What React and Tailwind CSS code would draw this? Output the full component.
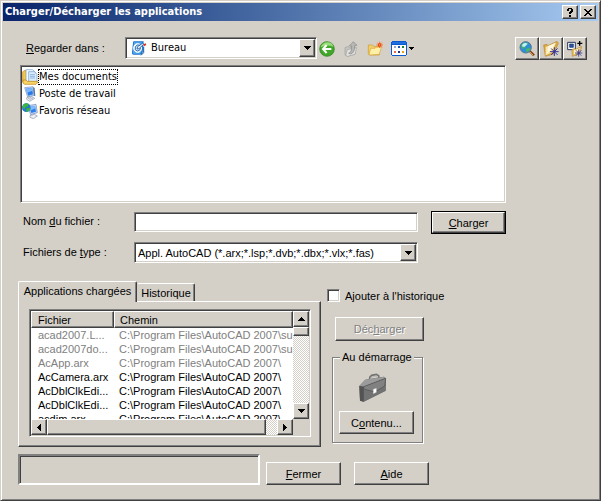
import { useState } from "react"
import clsx from "clsx"

const SUNKEN =
    "border border-t-[#808080] border-l-[#808080] border-r-white border-b-white p-px shadow-[inset_1px_1px_0_#404040,inset_-1px_-1px_0_#d4d0c8]"
const RAISED =
    "bg-[#d4d0c8] border border-t-white border-l-white border-r-[#404040] border-b-[#404040] shadow-[inset_-1px_-1px_0_#808080]"
const DITHER =
    "bg-[repeating-conic-gradient(#fff_0_25%,#d4d0c8_0_50%)] bg-[length:2px_2px]"

const ARROWS = {
    up: { box: "0 0 7 4", d: "M3 0h1v1h1v1h1v1h1v1H0V3h1V2h1V1h1z", size: "w-[7px] h-1" },
    down: { box: "0 0 7 4", d: "M0 0h7v1H6v1H5v1H4v1H3V3H2V2H1V1H0z", size: "w-[7px] h-1" },
    left: { box: "0 0 4 7", d: "M4 0v7H3V6H2V5H1V4H0V3h1V2h1V1h1V0z", size: "w-1 h-[7px]" },
    right: { box: "0 0 4 7", d: "M0 0v7h1V6h1V5h1V4h1V3H3V2H2V1H1V0z", size: "w-1 h-[7px]" },
}

function Arrow({ dir }) {
    const a = ARROWS[dir]
    return (
        <svg viewBox={a.box} className={a.size} shapeRendering="crispEdges" aria-hidden="true">
            <path d={a.d} />
        </svg>
    )
}

function PushButton({ children, className, isDefault, ...props }) {
    return (
        <button
            type="button"
            className={clsx(
                RAISED,
                "flex items-center justify-center shrink-0 disabled:text-[#808080] disabled:[text-shadow:1px_1px_0_#fff]",
                isDefault && "outline-1 outline-black -outline-offset-1 border-2 border-r-[#404040]",
                className
            )}
            {...props}
        >
            {children}
        </button>
    )
}

function ScrollButton({ dir, label }) {
    return (
        <button type="button" aria-label={label} className={clsx(RAISED, "w-4 h-4 shrink-0 flex items-center justify-center")}>
            <Arrow dir={dir} />
        </button>
    )
}

function Combo({ id, icon, value, className }) {
    return (
        <div className={clsx(SUNKEN, "bg-white flex min-w-0 flex-1 relative", className)}>
            {icon && <span className="absolute left-[5px] top-[2px] pointer-events-none">{icon}</span>}
            <select
                id={id}
                defaultValue={value}
                className={clsx("appearance-none bg-transparent flex-1 min-w-0 outline-none", icon ? "pl-6 font-[Tahoma,'DejaVu_Sans_Condensed',sans-serif]" : "pl-[2px]")}
            >
                <option>{value}</option>
            </select>
            <span className={clsx(RAISED, "w-4 flex items-center justify-center pointer-events-none")}>
                <Arrow dir="down" />
            </span>
        </div>
    )
}

function DesktopIcon() {
    return (
        <svg viewBox="0 0 48 48" className="w-4 h-4" aria-hidden="true">
            <path d="M9 4h29l-3 34q-2 6-8 6H8q-6 0-5-6L6 8q0-4 3-4z" fill="#1c74c8" />
            <path d="M9 7h25l-3 29q-1 5-6 5H8q-3 0-2-5z" fill="#54a9ee" />
            <ellipse cx="20" cy="24" rx="12" ry="13" fill="#e8f4ff" stroke="#fff" strokeWidth="3" />
            <path d="M27 16q-10-5-14 5-3 11 6 12 9 0 10-10M18 27l2-7 15-11 3 4-14 13z" fill="#cfe6fa" stroke="#1d5ca5" strokeWidth="2.5" />
            <path d="M37 13l7-3 2 5-7 4z" fill="#d8331f" />
            <path d="M38 20v18l-8 8" fill="none" stroke="#155596" strokeWidth="3" />
        </svg>
    )
}

function DocumentsIcon() {
    return (
        <svg viewBox="0 0 48 48" className="w-4 h-4" aria-hidden="true">
            <path d="M2 9l4-4h7l3 5v33H6l-4-5z" fill="#f5c64c" stroke="#bd8415" strokeWidth="2" />
            <path d="M12 2h20l9 9v27H12z" fill="#f5faff" stroke="#6b98c6" strokeWidth="2" />
            <path d="M20 8h17l8 8v22H20z" fill="#dcecfb" stroke="#6b98c6" strokeWidth="2" />
            <path d="M24 17h15M24 22h15M24 27h15" stroke="#80aee0" strokeWidth="2.5" />
            <path d="M3 33h9l4 4h30v5l-4 4H8l-5-4z" fill="#f9d568" stroke="#b97e12" strokeWidth="2" />
        </svg>
    )
}

function ComputerIcon() {
    return (
        <svg viewBox="0 0 48 48" className="w-4 h-4" aria-hidden="true">
            <path d="M8 5l25-3 4 26-20 5z" fill="#b9d2f5" stroke="#7a93ba" strokeWidth="2" />
            <path d="M12 8l18-2 3 19-14 4z" fill="#2a7bea" />
            <path d="M12 8l18-2 1 8-17 7z" fill="#7db9fa" />
            <path d="M33 3l5 3 2 25-4-2z" fill="#5d77a4" />
            <path d="M14 35l14-4 10 6-15 9-9-6z" fill="#eef0f4" stroke="#8a94a7" strokeWidth="2" />
            <path d="M18 38l11-4M22 41l11-5" stroke="#9aa5b8" strokeWidth="2" />
        </svg>
    )
}

function NetworkIcon() {
    return (
        <svg viewBox="0 0 48 48" className="w-4 h-4" aria-hidden="true">
            <path d="M17 8l25-4 4 25-20 6z" fill="#c6daf5" stroke="#7088b3" strokeWidth="2" />
            <path d="M21 12l18-3 3 17-14 4z" fill="#2d80ec" />
            <path d="M21 12l18-3 1 7-17 7z" fill="#84bdfb" />
            <path d="M24 38l13-4 9 5-12 8-10-4z" fill="#eef0f4" stroke="#8a94a7" strokeWidth="2" />
            <circle cx="13" cy="14" r="13" fill="#2277cf" />
            <path d="M4 5q9-7 16-2l-2 7-7 2-3 6-7-4zM14 16l9-2 2 5-8 8-5-3z" fill="#3eb53c" />
        </svg>
    )
}

function BackIcon() {
    return (
        <svg viewBox="0 0 48 48" className="w-4 h-4" aria-hidden="true">
            <circle cx="24" cy="24" r="22" fill="#42a62b" stroke="#278019" strokeWidth="2" />
            <path d="M5 19Q9 5 24 4t19 13q-18-8-38 2z" fill="#9bdd7c" />
            <path d="M23 12L12 24l11 12M13 24h24" fill="none" stroke="#fff" strokeWidth="6" />
        </svg>
    )
}

function UpIcon() {
    return (
        <svg viewBox="0 0 48 48" className="w-4 h-4" aria-hidden="true">
            <path d="M6 20l10-4 3 4h18v19l-24 7-7-4z" fill="#c4c4c2" stroke="#a0a09e" strokeWidth="2" />
            <path d="M8 43l5-17 28-6-5 20-22 6z" fill="#e0e0de" stroke="#a6a6a4" strokeWidth="2" />
            <path d="M17 37q10-3 9-22h-7L31 2l11 11h-7q1 22-12 26z" fill="#b8b8b6" stroke="#868684" strokeWidth="2" />
        </svg>
    )
}

function NewFolderIcon() {
    return (
        <svg viewBox="0 0 48 48" className="w-4 h-4" aria-hidden="true">
            <path d="M4 12h13l4 5h16v25H7l-3-4z" fill="#f3cf67" stroke="#cc9a2f" strokeWidth="2" />
            <path d="M6 42l5-20h13l4-4h15l-6 22z" fill="#fff0a8" stroke="#d6a636" strokeWidth="2" />
            <path d="M38 2v19M28 12h20M31 5l14 14M45 5L31 19" stroke="#f47424" strokeWidth="3" />
            <circle cx="38" cy="12" r="5" fill="#e8380d" />
            <circle cx="38" cy="12" r="2" fill="#ffc04d" />
        </svg>
    )
}

function ViewsIcon() {
    return (
        <svg viewBox="0 0 16 15" className="w-4 h-[15px]" shapeRendering="crispEdges" aria-hidden="true">
            <path d="M1 0h14v1h1v13h-1v1H1v-1H0V1h1z" fill="#0a5bd0" />
            <path d="M1 1h14v2H1z" fill="#1f6fe0" />
            <path d="M1 4h14v10H1z" fill="#fff" />
            <path d="M3 5h2v2H3z" fill="#9ba7c4" />
            <path d="M7 5h2v2H7z" fill="#1b55b8" />
            <path d="M11 5h2v2h-2z" fill="#1c7f38" />
            <path d="M3 10h2v2H3z" fill="#ee6b4d" />
            <path d="M7 10h2v2H7z" fill="#24337c" />
            <path d="M11 10h2v2h-2z" fill="#e8a11d" />
        </svg>
    )
}

function SearchWebIcon() {
    return (
        <svg viewBox="0 0 48 48" className="w-4 h-4 shrink-0" aria-hidden="true">
            <path d="M32 30l13 13" stroke="#7c4216" strokeWidth="7" />
            <path d="M31 31l12 12" stroke="#e69b52" strokeWidth="3" />
            <circle cx="20" cy="19" r="17" fill="#2e8fd6" stroke="#55738d" strokeWidth="3" />
            <path d="M6 15Q10 3 22 5l7 4-8 3-3 8-7 4zM20 24l12-4 3 4q-5 9-13 10z" fill="#48b46c" />
            <path d="M11 9q8-6 15-1l-9 9q-5 1-8-1z" fill="#c5f2f6" />
        </svg>
    )
}

function Burst({ x, y, r }) {
    return (
        <g transform={`translate(${x} ${y}) scale(${r})`}>
            <path d="M0-11V11M-11 0H11M-8-8L8 8M8-8L-8 8" stroke="#34359a" strokeWidth="2.5" />
        </g>
    )
}

function FavoritesIcon() {
    return (
        <svg viewBox="0 0 48 48" className="w-4 h-4 shrink-0" aria-hidden="true">
            <path d="M2 12l10-2 3 4 27-13 4 6-14 32-25 7z" fill="#d9a943" stroke="#b98a35" strokeWidth="2" />
            <path d="M8 17l8-2 22-10-9 28-21 10z" fill="#f9e6ad" />
            <path d="M16 15l22-10-9 16-17 17z" fill="#fff8dd" />
            <Burst x={34} y={32} r={1.2} />
        </svg>
    )
}

function AddFavoriteIcon() {
    return (
        <svg viewBox="0 0 48 48" className="w-4 h-4 shrink-0" aria-hidden="true">
            <path d="M2 4h23v22H2z" fill="#fff" stroke="#26365e" strokeWidth="3" />
            <path d="M8 9h11v10H8z" fill="#2a5aa8" stroke="#162c5c" strokeWidth="2" />
            <path d="M38 0v14M31 7h15" stroke="#000" strokeWidth="4" />
            <path d="M15 25l8-2 3 2 18-9-6 22-22 8z" fill="#e7c165" stroke="#b98a35" strokeWidth="2" />
            <path d="M21 28l18-7-9 16-9 3z" fill="#fdf0c3" />
            <Burst x={35} y={36} r={1} />
        </svg>
    )
}

function BriefcaseIcon() {
    return (
        <svg viewBox="0 0 87 90" className="w-[29px] h-[30px]" aria-hidden="true">
            <path d="M33 26l3-14 5-5 14-3 7 4 1 10" fill="none" stroke="#737373" strokeWidth="5" />
            <path d="M36 23l3-10 15-4 4 7" fill="none" stroke="#aaa" strokeWidth="2" />
            <path d="M4 39l18-19 56-9 5 5v37L17 86l-11-3z" fill="#606060" />
            <path d="M4 39l18-19 56-9 5 5-66 25z" fill="#9b9b9b" />
            <path d="M17 41l66-25v37L17 86z" fill="#727272" />
            <path d="M17 41l66-25-3 23-29 18-34-9z" fill="#818181" stroke="#4f4f4f" strokeWidth="2" />
            <path d="M4 39l13 2v45l-11-3z" fill="#535353" />
            <path d="M46 49l9-3v12l-9 4z" fill="#fff" stroke="#c5c5c5" strokeWidth="1" />
        </svg>
    )
}

const places = [
    { name: "Mes documents", icon: <DocumentsIcon /> },
    { name: "Poste de travail", icon: <ComputerIcon /> },
    { name: "Favoris réseau", icon: <NetworkIcon /> },
]

const loadedApps = [
    { file: "acad2007.L...", path: "C:\\Program Files\\AutoCAD 2007\\su...", dimmed: true },
    { file: "acad2007do...", path: "C:\\Program Files\\AutoCAD 2007\\su...", dimmed: true },
    { file: "AcApp.arx", path: "C:\\Program Files\\AutoCAD 2007\\", dimmed: true },
    { file: "AcCamera.arx", path: "C:\\Program Files\\AutoCAD 2007\\" },
    { file: "AcDblClkEdi...", path: "C:\\Program Files\\AutoCAD 2007\\" },
    { file: "AcDblClkEdi...", path: "C:\\Program Files\\AutoCAD 2007\\" },
    { file: "acdim.arx", path: "C:\\Program Files\\AutoCAD 2007\\" },
]

function TitleBar() {
    return (
        <header className="h-[18px] flex items-center gap-[2px] pl-[2px] pr-[2px] bg-linear-to-r from-[#0a246a] to-[#a6caf0]">
            <h1 className="flex-1 text-white font-bold whitespace-nowrap font-[Tahoma,'DejaVu_Sans_Condensed',sans-serif]">
                Charger/Décharger les applications
            </h1>
            <button type="button" aria-label="Aide contextuelle" className={clsx(RAISED, "w-4 h-[14px] flex items-center justify-center")}>
                <svg viewBox="0 0 7 9" className="w-[7px] h-[9px]" shapeRendering="crispEdges" aria-hidden="true">
                    <path d="M1 0h4v1h1v3H5v1H4v1H2V4h1V3h1V1H2v2H0V1h1zM2 7h2v2H2z" />
                </svg>
            </button>
            <button type="button" aria-label="Fermer la fenêtre" className={clsx(RAISED, "w-4 h-[14px] flex items-center justify-center")}>
                <svg viewBox="0 0 8 7" className="w-2 h-[7px]" shapeRendering="crispEdges" aria-hidden="true">
                    <path d="M0 0h2v1h1v1h2V1h1V0h2v1H7v1H6v1H5v1h1v1h1v1h1v1H6V6H5V5H3v1H2v1H0V6h1V5h1V4h1V3H2V2H1V1H0z" />
                </svg>
            </button>
        </header>
    )
}

function LoadedList() {
    return (
        <div className={clsx(SUNKEN, "bg-white")}>
            <div className="flex h-[108px]">
                <div className="flex-1 min-w-0 overflow-hidden">
                    <table className="w-full table-fixed border-separate border-spacing-0 text-left whitespace-nowrap leading-[14px]">
                        <thead>
                            <tr>
                                <th className={clsx(RAISED, "w-[83px] h-[17px] p-0 pl-[6px] font-normal")}>Fichier</th>
                                <th className={clsx(RAISED, "h-[17px] p-0 pl-[5px] font-normal")}>Chemin</th>
                            </tr>
                        </thead>
                        <tbody>
                            {loadedApps.map((app, i) => (
                                <tr key={i} className={app.dimmed ? "text-[#808080]" : "text-black"}>
                                    <td className="h-[14px] p-0 pl-[7px] overflow-hidden">{app.file}</td>
                                    <td className="h-[14px] p-0 pl-[5px] overflow-hidden">{app.path}</td>
                                </tr>
                            ))}
                        </tbody>
                    </table>
                </div>
                <div className={clsx(DITHER, "w-4 flex flex-col")}>
                    <ScrollButton dir="up" label="Défiler vers le haut" />
                    <div className={clsx(RAISED, "h-[9px]")} />
                    <div className="flex-1" />
                    <ScrollButton dir="down" label="Défiler vers le bas" />
                </div>
            </div>
            <div className="flex h-4 bg-[#d4d0c8] pr-4">
                <ScrollButton dir="left" label="Défiler à gauche" />
                <div className={clsx(DITHER, "flex-1 pr-[11px] flex")}>
                    <div className={clsx(RAISED, "flex-1")} />
                </div>
                <ScrollButton dir="right" label="Défiler à droite" />
            </div>
        </div>
    )
}

export default function App() {
    const [tab, setTab] = useState("loaded")
    const [fileName, setFileName] = useState("")
    const [addToHistory, setAddToHistory] = useState(false)

    return (
        <div className="min-h-screen flex flex-col bg-[#d4d0c8] text-black text-[11px] leading-[14px] font-['Liberation_Sans',Arial,sans-serif] border border-t-[#d4d0c8] border-l-[#d4d0c8] border-r-[#404040] border-b-[#404040] shadow-[inset_1px_1px_0_#fff,inset_-1px_-1px_0_#808080] p-[2px]">
            <TitleBar />

            <main className="flex-1 flex flex-col pl-[15px] pr-[11px] pt-4 pb-[13px]">
                <div className="flex gap-[9px] pl-[2px]">
                    <div className="flex-1 min-w-0 flex">
                        <label htmlFor="look-in" className="w-[105px] pl-[6px] pt-1 shrink-0 whitespace-nowrap">
                            <u>R</u>egarder dans :
                        </label>
                        <Combo id="look-in" icon={<DesktopIcon />} value="Bureau" className="h-[22px]" />
                        <div className="w-[189px] pl-[2px] flex items-center gap-2">
                            <button type="button" aria-label="Précédent"><BackIcon /></button>
                            <button type="button" aria-label="Dossier parent"><UpIcon /></button>
                            <button type="button" aria-label="Nouveau dossier"><NewFolderIcon /></button>
                            <button type="button" aria-label="Affichage" className="flex items-center gap-[2px]">
                                <ViewsIcon />
                                <svg viewBox="0 0 5 3" className="w-[5px] h-[3px]" shapeRendering="crispEdges" aria-hidden="true">
                                    <path d="M0 0h5v1H4v1H3v1H2V2H1V1H0z" />
                                </svg>
                            </button>
                        </div>
                    </div>
                    <div className="flex">
                        <PushButton className="w-6 h-[23px]" aria-label="Rechercher sur le Web"><SearchWebIcon /></PushButton>
                        <PushButton className="w-6 h-[23px]" aria-label="Regarder dans les favoris"><FavoritesIcon /></PushButton>
                        <PushButton className="w-6 h-[23px]" aria-label="Ajouter aux favoris"><AddFavoriteIcon /></PushButton>
                    </div>
                </div>

                <div className="flex-1 flex flex-col pr-[81px]">
                    <ul className={clsx(SUNKEN, "flex-1 min-h-[138px] bg-white mt-[5px] ml-[2px] pt-[2px] font-[Tahoma,'DejaVu_Sans_Condensed',sans-serif]")}>
                        {places.map((place, i) => (
                            <li key={place.name} className="flex items-center h-[17px]">
                                {place.icon}
                                <span className={clsx("border border-dotted leading-[14px]", i === 0 ? "border-black" : "border-transparent")}>
                                    {place.name}
                                </span>
                            </li>
                        ))}
                    </ul>

                    <div className="flex mt-2 ml-[2px]">
                        <label htmlFor="file-name" className="w-[114px] pl-[3px] pt-[3px] shrink-0">
                            Nom <u>d</u>u fichier :
                        </label>
                        <input
                            id="file-name"
                            type="text"
                            value={fileName}
                            onChange={(e) => setFileName(e.target.value)}
                            className={clsx(SUNKEN, "bg-white h-5 mt-px flex-1 min-w-0 outline-none")}
                        />
                        <PushButton isDefault className="w-[75px] h-[23px] ml-[13px]"><span><u>C</u>harger</span></PushButton>
                    </div>

                    <div className="flex mt-2 ml-[2px] pr-[88px]">
                        <label htmlFor="file-type" className="w-[114px] pl-[3px] pt-[3px] shrink-0">
                            Fichiers de <u>t</u>ype :
                        </label>
                        <Combo id="file-type" value="Appl. AutoCAD (*.arx;*.lsp;*.dvb;*.dbx;*.vlx;*.fas)" className="h-[21px]" />
                    </div>

                    <div className="flex gap-[6px] mt-[18px]">
                        <section className="flex-1 min-w-0">
                            <div role="tablist" className="flex items-end">
                                <button
                                    type="button"
                                    role="tab"
                                    aria-selected={tab === "loaded"}
                                    onClick={() => setTab("loaded")}
                                    className="relative z-10 -mb-px w-[119px] h-[21px] pb-[2px] rounded-t-[2px] bg-[#d4d0c8] border border-b-0 border-t-white border-l-white border-r-[#404040] shadow-[inset_-1px_0_0_#808080] whitespace-nowrap"
                                >
                                    Applications chargées
                                </button>
                                <button
                                    type="button"
                                    role="tab"
                                    aria-selected={tab === "history"}
                                    onClick={() => setTab("history")}
                                    className="w-[58px] h-[18px] rounded-t-[2px] bg-[#d4d0c8] border border-b-0 border-t-white border-l-[#d4d0c8] border-r-[#404040] shadow-[inset_-1px_0_0_#808080]"
                                >
                                    Historique
                                </button>
                            </div>
                            <div role="tabpanel" className={clsx(RAISED, "pl-[10px] pr-[9px] pt-[7px] pb-[9px]")}>
                                <LoadedList />
                            </div>
                        </section>

                        <div className="w-[179px] pt-2">
                            <label className="flex items-center gap-[5px] h-[13px]">
                                <input
                                    type="checkbox"
                                    checked={addToHistory}
                                    onChange={(e) => setAddToHistory(e.target.checked)}
                                    className={clsx(SUNKEN, "appearance-none w-[13px] h-[13px] bg-white checked:bg-[#404040]")}
                                />
                                Ajouter à l'historique
                            </label>
                            <PushButton disabled className="w-[89px] h-6 mt-[15px] ml-2"><span>Déc<u>h</u>arger</span></PushButton>
                            <fieldset className="w-[91px] ml-[5px] mt-[9px] mb-px border border-[#808080] shadow-[1px_1px_0_#fff,inset_1px_1px_0_#fff] pl-[6px] pb-2">
                                <legend className="ml-px px-[2px] whitespace-nowrap bg-[#d4d0c8]">Au démarrage</legend>
                                <div className="mt-[9px] ml-[19px]"><BriefcaseIcon /></div>
                                <PushButton className="w-[75px] h-[23px] mt-2"><span>C<u>o</u>ntenu...</span></PushButton>
                            </fieldset>
                        </div>
                    </div>

                    <div className="flex items-end mt-[7px] pr-[77px]">
                        <output className="flex-1 h-[31px] border-2 border-t-[#808080] border-l-[#808080] border-r-white border-b-white shadow-[inset_1px_1px_0_#404040]" />
                        <PushButton className="w-[75px] h-[23px] ml-[6px]"><span><u>F</u>ermer</span></PushButton>
                        <PushButton className="w-[75px] h-[23px] ml-[13px]"><span><u>A</u>ide</span></PushButton>
                    </div>
                </div>
            </main>
        </div>
    )
}
